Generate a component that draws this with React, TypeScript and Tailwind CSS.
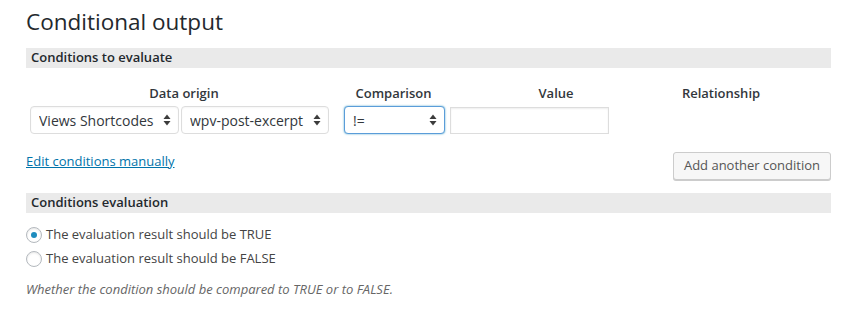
import React from 'react';

const font = { fontFamily: '"Open Sans", "Liberation Sans", sans-serif' };

function Arrows() {
  return (
    <svg width="8" height="12" viewBox="0 0 8 12" className="pointer-events-none absolute right-[8px] top-1/2 -translate-y-1/2">
      <path d="M4 0.5 L7.5 5 L0.5 5 Z" fill="#3c3c3c" />
      <path d="M4 11.5 L7.5 7 L0.5 7 Z" fill="#3c3c3c" />
    </svg>
  );
}

function FakeSelect({ value, width, focused }: { value: string; width: string; focused?: boolean }) {
  return (
    <div className={`relative ${width}`}>
      <select
        defaultValue={value}
        className={`h-[28px] w-full appearance-none rounded-[4px] border bg-white pl-[8px] pr-[22px] text-[14px] text-[#32373c] outline-none ${
          focused
            ? 'border-[#5b9dd9] shadow-[0_0_2px_rgba(30,140,190,0.8)]'
            : 'border-[#dddddd] shadow-[inset_0_1px_2px_rgba(0,0,0,0.04)]'
        }`}
      >
        <option value={value}>{value}</option>
      </select>
      <Arrows />
    </div>
  );
}

function Radio({ checked, label }: { checked?: boolean; label: string }) {
  return (
    <label className="flex h-[24px] items-center gap-[4px] text-[13px] text-[#444444]">
      <span className="flex h-[16px] w-[16px] items-center justify-center rounded-full border border-[#b4b9be] bg-white shadow-[inset_0_1px_2px_rgba(0,0,0,0.1)]">
        {checked && <span className="h-[6px] w-[6px] rounded-full bg-[#1e8cbe]" />}
      </span>
      {label}
    </label>
  );
}

export default function App() {
  return (
    <div className="min-h-[319px] w-[857px] bg-white pl-[26px] pr-[26px]" style={font}>
      <h2 className="pt-[8px] text-[22.5px] leading-[28px] text-[#23282d]">Conditional output</h2>

      <div className="mt-[12px] flex h-[20px] w-[805px] items-center bg-[#eaeaea] pl-[5px] text-[13px] font-semibold text-[#23282d]">
        Conditions to evaluate
      </div>

      {/* condition table */}
      <div className="mt-[15px] flex text-[13px] font-semibold text-[#32373c]">
        <div className="w-[316px] text-center leading-[20px]">Data origin</div>
        <div className="ml-[1px] w-[101px] text-center leading-[20px]">Comparison</div>
        <div className="ml-[6px] w-[212px] text-center leading-[20px]">Value</div>
        <div className="w-[118px] text-center leading-[20px]">Relationship</div>
      </div>
      <div className="mt-[3px] flex items-center pl-[4px]">
        <FakeSelect value="Views Shortcodes" width="w-[149px]" />
        <div className="ml-[2px]">
          <FakeSelect value="wpv-post-excerpt" width="w-[148px]" />
        </div>
        <div className="ml-[15px]">
          <FakeSelect value="!=" width="w-[101px]" focused />
        </div>
        <input
          type="text"
          className="ml-[5px] h-[27px] w-[159px] border border-[#dddddd] bg-white shadow-[inset_0_1px_2px_rgba(0,0,0,0.07)] outline-none"
        />
      </div>

      <div className="mt-[18px] flex w-[805px] items-start justify-between">
        <a href="#" className="mt-[-1px] text-[13px] leading-[20px] text-[#0073aa] underline">
          Edit conditions manually
        </a>
        <button className="h-[28px] rounded-[3px] border border-[#cccccc] bg-[#f7f7f7] px-[10px] text-[13px] text-[#555555] shadow-[0_1px_0_#cccccc]">
          Add another condition
        </button>
      </div>

      <div className="mt-[13px] flex h-[20px] w-[805px] items-center bg-[#eaeaea] pl-[5px] text-[13px] font-semibold text-[#23282d]">
        Conditions evaluation
      </div>

      <div className="mt-[10px]">
        <Radio checked label="The evaluation result should be TRUE" />
        <Radio label="The evaluation result should be FALSE" />
      </div>

      <p className="mt-[8px] text-[13px] italic leading-[20px] text-[#666666]">
        Whether the condition should be compared to TRUE or to FALSE.
      </p>
    </div>
  );
}
